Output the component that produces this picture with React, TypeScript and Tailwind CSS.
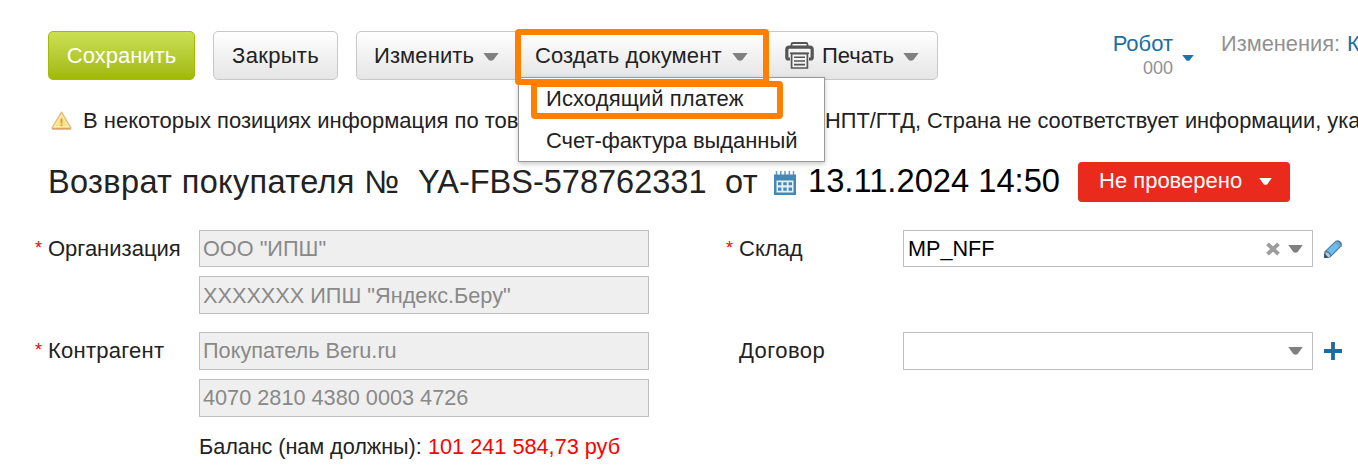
import React from "react";

function Caret({ className }: { className: string }) {
  return (
    <svg viewBox="0 0 16 8" preserveAspectRatio="none" className={`shrink-0 ${className}`} aria-hidden="true">
      <path d="M0.3 0H15.7L10.3 7Q8 8.6 5.7 7Z" fill="currentColor" />
    </svg>
  );
}

function PrinterIcon() {
  return (
    <svg viewBox="0 0 29 27" className="h-[27px] w-[29px] shrink-0" fill="none" stroke="#555" aria-hidden="true">
      <path d="M6.5 4V2.2Q6.5 1 8 1H21Q22.5 1 22.5 2.2V4" strokeWidth="1.8" />
      <path d="M5 17H3.2Q1.8 17 1.8 15.5V7.8Q1.8 5.2 4.5 5.2H24.5Q27.2 5.2 27.2 7.8V15.5Q27.2 17 25.8 17H24" strokeWidth="3.2" />
      <path d="M5 11.2H24" strokeWidth="1.4" />
      <path d="M6.6 11.7H22.4V26H6.6Z" fill="#f4f4f4" strokeWidth="1.7" />
      <path d="M9 15.3H20M9 19H20M9 22.6H20" strokeWidth="1.6" />
    </svg>
  );
}

function WarningIcon() {
  return (
    <svg viewBox="0 0 21 19" className="h-[19px] w-[21px] shrink-0" aria-hidden="true">
      <path d="M10.5 1.2L19.8 16.5Q20.2 17.9 18.8 17.9H2.2Q0.8 17.9 1.2 16.5Z" fill="#f5d98e" stroke="#e3bb7c" strokeWidth="1.3" strokeLinejoin="round" />
      <path d="M10.5 4L17.4 15.5H3.6Z" fill="#fbe282" stroke="#fff0b8" strokeWidth="1" />
      <path d="M1.4 17.8H19.6" stroke="#d9a06c" strokeWidth="1.4" />
      <path d="M10.5 7.5V12.4M10.5 13.6V15.3" stroke="#cf9a48" strokeWidth="1.8" />
    </svg>
  );
}

function CalendarIcon() {
  return (
    <svg viewBox="0 0 22 25" className="h-[25px] w-[22px] shrink-0" aria-hidden="true">
      <path d="M2.5 1V6M6.8 1V6M11 1V6M15.3 1V6M19.5 1V6" stroke="#5d9bc2" strokeWidth="1.5" />
      <path d="M0 4.5H22V25H0Z" fill="#4489b5" />
      <path d="M2.5 10.5H19.5V22.5H2.5Z" fill="#e4f0f7" />
      <path d="M4 12.2H7.4V15.3H4ZM9.3 12.2H12.7V15.3H9.3ZM14.6 12.2H18V15.3H14.6ZM4 17.6H7.4V20.7H4ZM9.3 17.6H12.7V20.7H9.3ZM14.6 17.6H18V20.7H14.6Z" fill="#4489b5" />
    </svg>
  );
}

function PencilIcon() {
  return (
    <svg viewBox="0 0 18 18" className="h-[18px] w-[18px] shrink-0" aria-hidden="true">
      <path d="M0.4 11.6L11.6 0.8Q13 0 14.2 0.2Q17.8 1.3 18 4.8L17.6 6.2L6.2 17.6L0.4 18Z" fill="#4b7e9d" />
      <path d="M2.6 11L12 1.8Q15.6 2 16.6 5.6L7.2 15Q6.4 11.8 2.6 11Z" fill="#6dbdf0" />
      <path d="M12 1.8Q15.6 2 16.6 5.6L15 7.2Q14 4.2 10.5 3.3Z" fill="#78a7c5" />
      <path d="M1.6 12.2Q5.5 12.6 6.2 16.2L4.5 17.2H1.6Z" fill="#b9cbd8" />
      <path d="M0 13L5 18H0Z" fill="#3f5361" />
    </svg>
  );
}

function ReadonlyField({ value, className }: { value: string; className: string }) {
  return (
    <div className={`flex w-[450px] items-center whitespace-nowrap border border-[#bfbfbf] bg-[#efefef] pl-[3px] text-[21.7px] leading-none text-[#898989] ${className}`}>
      {value}
    </div>
  );
}

function Label({ text, required, className }: { text: string; required?: boolean; className: string }) {
  return (
    <div className={`flex items-center whitespace-nowrap text-[22px] leading-none ${className}`}>
      <span className="-mt-0.5 w-[13px] shrink-0 text-[18px] text-[#ff0000]">{required ? "*" : ""}</span>
      <span>{text}</span>
    </div>
  );
}

export default function App() {
  return (
    <main className="relative h-[470px] w-[1358px] overflow-hidden bg-white font-['Liberation_Sans',Arial,sans-serif] text-[22px] leading-none text-[#222]">
      <header className="flex h-20 items-start pl-12 pt-[31px]">
        <button className="h-[49px] w-[147px] shrink-0 rounded-[5px] border border-[#a3bb00] bg-linear-to-b from-[#cbe052] to-[#a1b900] text-white">
          Сохранить
        </button>
        <button className="ml-[18px] h-[49px] w-[125px] shrink-0 rounded-[5px] border border-[#c8c8c8] bg-linear-to-b from-white to-[#e5e5e5] tracking-[0.3px]">
          Закрыть
        </button>
        <div className="ml-[18px] flex h-[49px] w-[582px] shrink-0 rounded-[5px] border border-[#c8c8c8] bg-linear-to-b from-white to-[#e5e5e5]">
          <button className="flex w-[161px] shrink-0 items-center pl-[17px]">
            <span className="w-[109px] text-left tracking-[0.1px]">Изменить</span>
            <Caret className="mt-[3px] h-[8px] w-[16px] text-[#808080]" />
          </button>
          <button className="flex w-[250px] shrink-0 items-center whitespace-nowrap pl-[17px]">
            <span className="w-[197px] text-left tracking-[0.1px]">Создать документ</span>
            <Caret className="mt-[3px] h-[8px] w-[16px] text-[#808080]" />
          </button>
          <button className="flex items-center pl-[17px]">
            <PrinterIcon />
            <span className="ml-2 w-[81px] text-left">Печать</span>
            <Caret className="mt-[3px] h-[8px] w-[16px] text-[#808080]" />
          </button>
        </div>
        <div className="ml-[173px] mt-[2px] flex w-[62px] shrink-0 flex-col items-end">
          <span className="text-[#1c6ea4]">Робот</span>
          <span className="mt-[4px] text-[18px] text-[#919191]">000</span>
        </div>
        <Caret className="ml-[9px] mt-[24px] h-[6px] w-[12px] text-[#1f73ad]" />
        <div className="ml-[27px] mt-[2px] flex shrink-0 whitespace-nowrap">
          <span className="w-[126px] text-[21.8px] text-[#919191]">Изменения:</span>
          <span className="text-[#1c6ea4]">К</span>
        </div>
      </header>

      <div className="flex h-20 items-center whitespace-nowrap pl-[51px]">
        <WarningIcon />
        <span className="ml-[10px] mt-[2px] w-[743px] shrink-0 pl-px">В некоторых позициях информация по тов</span>
        <span className="mt-[2px] text-[21.8px]">НПТ/ГТД, Страна не соответствует информации, ука</span>
      </div>

      <div className="-mt-[18px] flex h-20 items-center whitespace-nowrap pl-12 text-[32.5px]">
        <h1 className="w-[370px] shrink-0 font-normal tracking-[0.35px]">Возврат покупателя №</h1>
        <span className="w-[307px] shrink-0">YA-FBS-578762331</span>
        <span className="w-[49px] shrink-0 tracking-[0.5px]">от</span>
        <CalendarIcon />
        <span className="-mt-0.5 ml-[12px] w-[270px] shrink-0 text-[32.7px] text-black">13.11.2024 14:50</span>
        <button className="flex h-10 w-[212px] shrink-0 items-center rounded-[4px] bg-[#e92a1c] pb-[3px] pl-[21px] text-[22px] text-white">
          <span className="w-[160px] text-left">Не проверено</span>
          <Caret className="mt-[2px] h-[7px] w-[13px] text-white" />
        </button>
      </div>

      <section className="mt-[8px] flex pl-[35px]">
        <div className="w-[691px] shrink-0">
          <div className="flex">
            <Label text="Организация" required className="h-[37px] w-[164px]" />
            <div>
              <ReadonlyField value={'ООО "ИПШ"'} className="h-[37px]" />
              <ReadonlyField value={'XXXXXXX ИПШ "Яндекс.Беру"'} className="mt-[9px] h-[38px] pt-px" />
            </div>
          </div>
          <div className="mt-[18px] flex">
            <Label text="Контрагент" required className="h-[37px] w-[164px] tracking-[0.25px]" />
            <div>
              <ReadonlyField value="Покупатель Beru.ru" className="h-[38px]" />
              <ReadonlyField value="4070 2810 4380 0003 4726" className="mt-[9px] h-[38px]" />
              <p className="mt-[19px] whitespace-nowrap text-[21.7px]">
                <span className="inline-block w-[229px] tracking-[-0.08px]">Баланс (нам должны):</span>
                <span className="text-[#ff0000]">101 241 584,73 руб</span>
              </p>
            </div>
          </div>
        </div>
        <div>
          <div className="flex items-center">
            <Label text="Склад" required className="h-[37px] w-[177px]" />
            <div className="flex h-[37px] w-[410px] items-center border border-[#bfbfbf] bg-white pl-1 text-[21.6px] text-black">
              <span className="flex-1">MP_NFF</span>
              <svg viewBox="0 0 14 14" className="h-[14px] w-[14px]" aria-hidden="true">
                <path d="M1.5 1.8L12.5 12.2M12.5 1.8L1.5 12.2" stroke="#9c9c9c" strokeWidth="3.8" />
              </svg>
              <Caret className="ml-[8px] mr-[9px] h-[8px] w-[15px] text-[#808080]" />
            </div>
            <div className="ml-[11px]">
              <PencilIcon />
            </div>
          </div>
          <div className="mt-[65px] flex items-center">
            <Label text="Договор" className="h-[37px] w-[177px] tracking-[0.45px]" />
            <div className="flex h-[38px] w-[410px] items-center justify-end border border-[#bfbfbf] bg-white">
              <Caret className="mr-[9px] h-[8px] w-[15px] text-[#808080]" />
            </div>
            <svg viewBox="0 0 18 18" className="ml-[11px] h-[18px] w-[18px]" aria-hidden="true">
              <path d="M9 0V18M0 9H18" stroke="#1b6ca3" strokeWidth="3.8" />
            </svg>
          </div>
        </div>
      </section>

      <div className="absolute left-[518px] top-[77px] h-[85px] w-[307px] whitespace-nowrap border border-[#999] bg-white pl-[27px] pt-[10px] shadow-[0_2px_5px_rgba(0,0,0,0.22)]">
        <div className="h-[42px] tracking-[0.1px]">Исходящий платеж</div>
        <div className="tracking-[-0.07px]">Счет-фактура выданный</div>
      </div>
      <div className="absolute left-[515px] top-[29px] h-[56px] w-[254px] rounded-[4px] border-6 border-[#ff8000]" />
      <div className="absolute left-[531px] top-[81px] h-[38px] w-[252px] rounded-[4px] border-6 border-[#ff8000]" />
    </main>
  );
}
